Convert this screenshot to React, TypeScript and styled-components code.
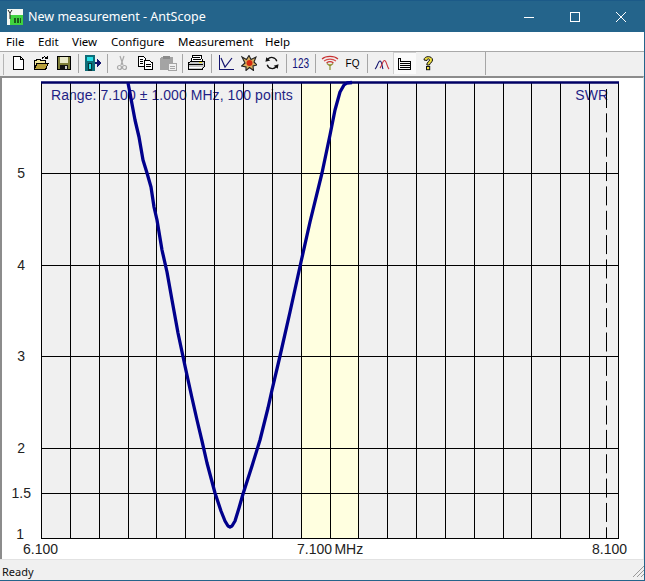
import styled, { createGlobalStyle } from 'styled-components';

const Global = createGlobalStyle`
  html, body { margin: 0; padding: 0; background: #fff; overflow: hidden; }
`;

const Window = styled.div`
  width: 645px;
  height: 581px;
  display: flex;
  flex-direction: column;
  box-sizing: border-box;
  border-bottom: 1px solid #24648b;
  border-right: 1px solid #24648b;
  background: #fff;
  font-family: 'Open Sans', 'Noto Sans', sans-serif;
  color: #000;
  overflow: hidden;
`;

const TitleBar = styled.div`
  height: 32px;
  flex: none;
  display: flex;
  align-items: center;
  box-sizing: border-box;
  padding-left: 7px;
  background: #24648b;
  border-top: 1px solid #1c5a88;
  color: #fff;
`;

const TitleText = styled.div`
  margin-left: 5px;
  font-family: 'Noto Sans', sans-serif;
  font-size: 12.5px;
`;

const WindowButtons = styled.div`
  margin-left: auto;
  display: flex;
`;

const WindowButton = styled.div`
  width: 46px;
  height: 31px;
  display: flex;
  align-items: center;
  justify-content: center;
`;

const MenuBar = styled.div`
  height: 19px;
  flex: none;
  display: flex;
  align-items: center;
  background: #fff;
  padding-left: 6px;
  font-family: 'Noto Sans', sans-serif;
  font-size: 11.5px;
`;

const MenuItem = styled.div<{ $w: number }>`
  width: ${({ $w }) => $w}px;
`;

const ToolBar = styled.div`
  height: 25px;
  flex: none;
  box-sizing: border-box;
  display: flex;
  align-items: center;
  padding: 0 0 2px 6px;
  background: #f0f0f0;
  border-top: 1px solid #a9a9a9;
  position: relative;
`;

const Grip = styled.div`
  position: absolute;
  left: 3px;
  top: 2px;
  bottom: 1px;
  width: 1px;
  background: #b5b5b5;
`;

const ToolSep = styled.div`
  width: 6px;
  height: 19px;
  flex: none;
  display: flex;
  justify-content: center;
  &::before {
    content: '';
    width: 1px;
    background: #a6a6a6;
  }
`;

const ToolButton = styled.div<{ $pressed?: boolean }>`
  width: 23px;
  height: 22px;
  flex: none;
  display: flex;
  align-items: center;
  justify-content: center;
  background: ${({ $pressed }) => ($pressed ? '#fafafa' : 'transparent')};
  box-shadow: ${({ $pressed }) => ($pressed ? 'inset 1px 1px 0 #d0d0d0' : 'none')};
`;

const ToolEnd = styled.div`
  margin-left: 46px;
  width: 1px;
  height: 23px;
  background: #a6a6a6;
`;

const ToolLabel = styled.span<{ $color: string; $size: number; $squeeze: number }>`
  font-family: 'Liberation Sans', sans-serif;
  font-size: ${({ $size }) => $size}px;
  color: ${({ $color }) => $color};
  display: inline-block;
  transform: scaleX(${({ $squeeze }) => $squeeze});
`;

const ClientArea = styled.div`
  flex: 1;
  min-height: 0;
  border-top: 2px solid #8c8c8c;
  border-left: 2px solid #8c8c8c;
  border-right: 1px solid #e6e6e6;
  background: #fff;
`;

const ChartSvg = styled.svg`
  display: block;
  font-family: 'Liberation Sans', Arial, sans-serif;
`;

const StatusBar = styled.div`
  height: 21px;
  flex: none;
  box-sizing: border-box;
  display: flex;
  align-items: center;
  justify-content: space-between;
  padding: 2px 0 0 2px;
  background: #f0f0f0;
  border-top: 1px solid #e2e2e2;
  font-family: 'Noto Sans', sans-serif;
  font-size: 11px;
  color: #111;
`;

const px = { width: 16, height: 16, viewBox: '0 0 16 16', shapeRendering: 'crispEdges' as const };

const AppIcon = () => (
  <svg width="16" height="16" viewBox="0 0 16 16" shapeRendering="crispEdges">
    <rect width="16" height="16" fill="#f4f8f2" />
    <rect x="3" y="6" width="13" height="10" fill="#3fd33f" />
    <rect x="7" y="9" width="2" height="5" fill="#1a5a1a" />
    <rect x="10" y="9" width="2" height="5" fill="#1a5a1a" />
    <rect x="13" y="9" width="1" height="5" fill="#1a5a1a" />
    <path d="M1 1 L3 4 L5 1 M3 4 V10" fill="none" stroke="#222" strokeWidth="1" shapeRendering="auto" />
  </svg>
);

const NewIcon = () => (
  <svg {...px}>
    <path d="M3.5 1.5H10.5L13.5 4.5V14.5H3.5Z M10.5 1.5V4.5H13.5" fill="#fff" stroke="#000" />
  </svg>
);

const OpenIcon = () => (
  <svg {...px}>
    <path d="M1.5 14.5V5.5H3L4 4.5H7L8 5.5H12.5V7.5" fill="#f2e8a0" stroke="#000" />
    <path d="M1.5 14.5L4 8H15.5L12.5 14.5Z" fill="#b9a23c" stroke="#000" />
    <path d="M9 3.5C10.5 1.5 12.5 1.5 14 3M14.5 1V3.5H12" fill="none" stroke="#000" />
  </svg>
);

const SaveIcon = () => (
  <svg {...px}>
    <rect x="1.5" y="1.5" width="13" height="13" fill="#7f7f3a" stroke="#000" />
    <rect x="4" y="2" width="8" height="6" fill="#e8e8c8" />
    <rect x="4" y="10" width="8" height="5" fill="#111" />
    <rect x="9" y="11" width="2" height="3" fill="#ccc" />
  </svg>
);

const TransferIcon = () => (
  <svg {...px} width={17} viewBox="0 0 17 16">
    <rect x="1" y="0" width="10" height="16" fill="#0e6d78" />
    <rect x="3" y="2" width="6" height="4" fill="#29e0e6" />
    <rect x="4" y="8" width="4" height="8" fill="#07363c" />
    <rect x="5" y="9" width="2" height="5" fill="#29e0e6" />
    <path d="M11 7H13V4L17 8L13 12V9H11Z" fill="#14146e" />
  </svg>
);

const CutIcon = () => (
  <svg {...px} shapeRendering="auto">
    <path d="M6 1L9 10M10 1L7 10" fill="none" stroke="#a8a8a8" strokeWidth="1.2" />
    <circle cx="5.5" cy="12.5" r="2" fill="none" stroke="#a8a8a8" strokeWidth="1.2" />
    <circle cx="10.5" cy="12.5" r="2" fill="none" stroke="#a8a8a8" strokeWidth="1.2" />
  </svg>
);

const CopyIcon = () => (
  <svg {...px}>
    <path d="M1.5 1.5H6.5L8.5 3.5V11.5H1.5Z" fill="#fff" stroke="#000" />
    <path d="M7.5 5.5H12.5L15.5 8V14.5H7.5Z" fill="#fff" stroke="#000" />
    <path d="M3 4H6M3 6H6M3 8H6M9 9H14M9 11H14" stroke="#000" />
  </svg>
);

const PasteIcon = () => (
  <svg {...px} width={18} viewBox="0 0 18 16">
    <rect x="1" y="2" width="13" height="13" rx="2" fill="#a4a4a4" />
    <rect x="4" y="1" width="7" height="3" fill="#8a8a8a" />
    <rect x="9.5" y="8.5" width="8" height="7" fill="#f0f0f0" stroke="#a4a4a4" />
    <path d="M11 11H16M11 13H16" stroke="#a4a4a4" />
  </svg>
);

const PrintIcon = () => (
  <svg {...px} width={17} viewBox="0 0 17 16">
    <path d="M4.5 0.5H13.5L14.5 6.5H3.5Z" fill="#fff" stroke="#000" />
    <path d="M5 2.5H12M5 4.5H13" stroke="#000" />
    <path d="M0.5 8L3 6.5H16.5V11.5L14 14.5H0.5Z" fill="#c8c8c8" stroke="#000" />
    <rect x="1" y="9" width="14" height="1" fill="#000" />
    <rect x="11" y="7" width="3" height="1" fill="#e8e020" />
    <rect x="1" y="12" width="13" height="1" fill="#fff" />
  </svg>
);

const ChartIcon = () => (
  <svg {...px}>
    <path d="M1.5 0V14.5H16" fill="none" stroke="#14146e" />
    <path d="M3 3L7 12L14 3" fill="none" stroke="#14146e" strokeWidth="1.2" shapeRendering="auto" />
  </svg>
);

const StarIcon = () => (
  <svg {...px} shapeRendering="auto">
    <path d="M1 2L5.5 4.5L8 0.5L10 4.5L15 2L13 7L16 10L12 11L12.5 15.5L8.5 12.5L5 15.5L5 12L0.5 11L4 8Z" fill="#d8b060" stroke="#222" strokeWidth="1.1" />
    <circle cx="8.5" cy="8" r="3" fill="#d62a10" />
  </svg>
);

const RefreshIcon = () => (
  <svg {...px} width={14} height={14} shapeRendering="auto">
    <path d="M13.5 6A6 6 0 0 0 3 4M2.5 10A6 6 0 0 0 13 12" fill="none" stroke="#111" strokeWidth="1.5" />
    <path d="M0.5 6.5L1.5 1.5L6 5ZM15.5 9.5L14.5 14.5L10 11Z" fill="#111" />
  </svg>
);

const AntennaIcon = () => (
  <svg {...px} width={18} viewBox="0 0 18 16" shapeRendering="auto">
    <path d="M1 4C5 0.5 13 0.5 17 4" fill="none" stroke="#c83232" strokeWidth="1.1" />
    <path d="M3 6C6.5 3.5 11.5 3.5 15 6" fill="none" stroke="#d84a4a" strokeWidth="1.1" />
    <path d="M5.5 8C7.5 6.5 10.5 6.5 12.5 8" fill="none" stroke="#c83232" strokeWidth="1.1" />
    <path d="M6 8.5L9 11L12 8.5M9 9V15" fill="none" stroke="#8f8f30" strokeWidth="1.2" />
  </svg>
);

const CurvesIcon = () => (
  <svg {...px} shapeRendering="auto">
    <path d="M1 14C3 13 4 6 6 6C8 6 8 12 9 14" fill="none" stroke="#14146e" strokeWidth="1.1" />
    <path d="M6 13C8 11 8.5 5.5 10.5 5.5C12.5 5.5 13 12 15 14" fill="none" stroke="#c8323c" strokeWidth="1.1" />
  </svg>
);

const ListIcon = () => (
  <svg {...px}>
    <path d="M1.5 3.5V14.5H13.5V6.5H3V3.5Z" fill="none" stroke="#000" />
    <path d="M2 3.5H1.5M3 8.5H13M3 10.5H13M3 12.5H13M3 6H13" stroke="#000" />
  </svg>
);

const HelpIcon = () => (
  <svg {...px} shapeRendering="auto">
    <path d="M4 5C4 0.5 12.5 0.5 12.5 5C12.5 8 9.5 7.5 9.5 10H6.8C6.8 6.5 9.5 7 9.5 5C9.5 3.5 7 3.5 7 5.5Z" fill="#f0e040" stroke="#111" />
    <rect x="6.5" y="11.5" width="3.2" height="3.2" fill="#f0e040" stroke="#111" />
  </svg>
);

const Num123 = () => <ToolLabel $color="#14147a" $size={14} $squeeze={0.72}>123</ToolLabel>;
const FqLabel = () => <ToolLabel $color="#000" $size={10} $squeeze={1}>FQ</ToolLabel>;

const TOOLS: (string | { key: string; Icon: () => React.ReactElement; pressed?: boolean })[] = [
  { key: 'new', Icon: NewIcon },
  { key: 'open', Icon: OpenIcon },
  { key: 'save', Icon: SaveIcon },
  'sep1',
  { key: 'transfer', Icon: TransferIcon },
  'sep2',
  { key: 'cut', Icon: CutIcon },
  { key: 'copy', Icon: CopyIcon },
  { key: 'paste', Icon: PasteIcon },
  'sep3',
  { key: 'print', Icon: PrintIcon },
  'sep4',
  { key: 'chart', Icon: ChartIcon },
  { key: 'star', Icon: StarIcon },
  { key: 'refresh', Icon: RefreshIcon },
  'sep5',
  { key: '123', Icon: Num123 },
  'sep6',
  { key: 'antenna', Icon: AntennaIcon },
  { key: 'fq', Icon: FqLabel },
  'sep7',
  { key: 'curves', Icon: CurvesIcon },
  { key: 'list', Icon: ListIcon, pressed: true },
  { key: 'help', Icon: HelpIcon },
];

const MENUS = [
  { label: 'File', w: 32 },
  { label: 'Edit', w: 34 },
  { label: 'View', w: 39 },
  { label: 'Configure', w: 67 },
  { label: 'Measurement', w: 87 },
  { label: 'Help', w: 40 },
];

// chart geometry, page coordinates
const LEFT = 41;
const RIGHT = 618;
const TOP = 82;
const BOTTOM = 538;
const V_LINES = Array.from({ length: 21 }, (_, i) => Math.round(LEFT + (i * (RIGHT - LEFT)) / 20) + 0.5);
const H_LINES = [173, 265, 356, 448, 493].map((y) => y + 0.5);
const Y_LABELS = [
  { t: '5', y: 178, x: 25 },
  { t: '4', y: 270, x: 25 },
  { t: '3', y: 361, x: 25 },
  { t: '2', y: 453, x: 25 },
  { t: '1.5', y: 498, x: 31 },
  { t: '1', y: 539, x: 24 },
];

const CURVE = [
  [128, 83], [130, 93], [132, 104], [135, 120], [139, 137], [143, 160], [147, 173], [151, 187], [154, 207],
  [157, 220], [162, 250], [167, 272], [172, 300], [178, 333], [185, 366], [192, 398], [197, 420], [202, 441],
  [207, 463], [215, 493], [221, 511], [225, 521], [228, 526], [230, 527], [232, 526], [235, 521], [239, 508],
  [243, 494], [252, 466], [260, 440], [268, 408], [272, 390], [280, 356], [290, 312], [301, 262], [310, 222],
  [322, 173], [330, 135], [335, 110], [340, 92], [344, 85], [347, 83], [352, 82.5],
];
const curvePath = CURVE.map(([x, y], i) => `${i ? 'L' : 'M'}${x} ${y}`).join(' ');

export default function App() {
  return (
    <Window>
      <Global />
      <TitleBar>
        <AppIcon />
        <TitleText>New measurement - AntScope</TitleText>
        <WindowButtons>
          <WindowButton>
            <svg width="10" height="10" viewBox="0 0 10 10"><path d="M0 5.5H10" stroke="#fff" /></svg>
          </WindowButton>
          <WindowButton>
            <svg width="10" height="10" viewBox="0 0 10 10"><rect x="0.5" y="0.5" width="9" height="9" fill="none" stroke="#fff" /></svg>
          </WindowButton>
          <WindowButton>
            <svg width="10" height="10" viewBox="0 0 10 10"><path d="M0 0L10 10M10 0L0 10" stroke="#fff" /></svg>
          </WindowButton>
        </WindowButtons>
      </TitleBar>

      <MenuBar>
        {MENUS.map((m) => (
          <MenuItem key={m.label} $w={m.w}>{m.label}</MenuItem>
        ))}
      </MenuBar>

      <ToolBar>
        <Grip />
        {TOOLS.map((t) =>
          typeof t === 'string' ? (
            <ToolSep key={t} />
          ) : (
            <ToolButton key={t.key} $pressed={t.pressed}>
              <t.Icon />
            </ToolButton>
          )
        )}
        <ToolEnd />
      </ToolBar>

      <ClientArea>
        <ChartSvg width="642" height="482" viewBox="2 78 642 482">
          <rect x={LEFT} y={TOP} width={RIGHT - LEFT} height={BOTTOM - TOP} fill="#f0f0f0" />
          <rect x={V_LINES[9]} y={TOP} width={V_LINES[11] - V_LINES[9]} height={BOTTOM - TOP} fill="#ffffe0" />
          <text x="51" y="100" fontSize="14" letterSpacing="0.06" fill="#1f1f85">Range: 7.100 ± 1.000 MHz, 100 points</text>
          <text x="608" y="100" fontSize="14" fill="#1f1f85" textAnchor="end">SWR</text>
          {V_LINES.map((x) => (
            <line key={x} x1={x} x2={x} y1={TOP} y2={BOTTOM} stroke="#000" />
          ))}
          {H_LINES.map((y) => (
            <line key={y} x1={LEFT} x2={RIGHT} y1={y} y2={y} stroke="#000" />
          ))}
          <line x1={LEFT} x2={RIGHT + 1} y1={BOTTOM + 0.5} y2={BOTTOM + 0.5} stroke="#000" />
          <line x1="606.5" x2="606.5" y1="89" y2="538" stroke="#000" strokeDasharray="19 5.35" />
          <line x1={LEFT} x2={RIGHT + 1} y1={82.5} y2={82.5} stroke="#000064" strokeWidth="2.5" />
          <path d={curvePath} fill="none" stroke="#00008c" strokeWidth="3.3" strokeLinejoin="round" />
          {Y_LABELS.map((l) => (
            <text key={l.t} x={l.x} y={l.y} fontSize="14" fill="#222" textAnchor="end">{l.t}</text>
          ))}
          <text x="23" y="554" fontSize="14" fill="#222">6.100</text>
          <text x="297" y="554" fontSize="14" wordSpacing="-1.5" fill="#222">7.100 MHz</text>
          <text x="592" y="554" fontSize="14" fill="#222">8.100</text>
        </ChartSvg>
      </ClientArea>

      <StatusBar>
        Ready
        <svg width="12" height="12" viewBox="0 0 12 12">
          <path d="M1 12L12 1M5 12L12 5M9 12L12 9" stroke="#9a9a9a" />
        </svg>
      </StatusBar>
    </Window>
  );
}
